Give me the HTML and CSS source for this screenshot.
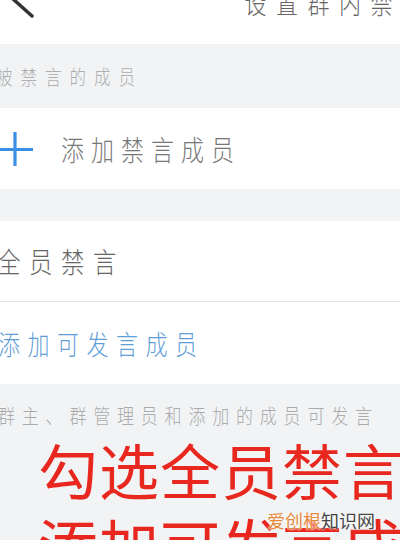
FILE: index.html
```html
<!DOCTYPE html>
<html lang="zh-CN">
<head>
    <meta charset="UTF-8">
    <meta name="viewport" content="width=device-width, initial-scale=1.0">
    <title>设置群内禁言</title>
    <link rel="stylesheet" href="styles.css">
</head>
<body>
    <div class="screen">
        <header class="navbar">
            <a class="nav-back" href="#">
                <svg width="40" height="24" viewBox="0 0 40 24">
                    <path d="M31 -18 L13 -1 L32 16" fill="none" stroke="#333" stroke-width="3.5" stroke-linecap="round" stroke-linejoin="round"/>
                </svg>
            </a>
            <div class="nav-title"><span class="tall">设置群内禁</span></div>
        </header>

        <div class="section-label"><span class="tall">被禁言的成员</span></div>

        <div class="row row-add">
            <svg class="icon-plus" width="36" height="34" viewBox="0 0 36 34">
                <path d="M0 17.5 H36 M18 0 V34" stroke="#3a8ee6" stroke-width="3.2" fill="none"/>
            </svg>
            <span class="tall add-text">添加禁言成员</span>
        </div>

        <div class="gap"></div>

        <div class="group">
            <div class="row row-all"><span class="tall">全员禁言</span></div>
            <div class="row row-speak"><span class="tall">添加可发言成员</span></div>
        </div>

        <div class="footer-note">
            <p class="note"><span class="tall">群主、群管理员和添加的成员可发言</span></p>
            <p class="red-tip">勾选全员禁言<br>添加可发言成员</p>
        </div>

        <div class="watermark"><span class="wm-orange">爱创根</span>知识网</div>
    </div>
</body>
</html>
```

FILE: styles.css
```css
* {
    margin: 0;
    padding: 0;
    box-sizing: border-box;
}

body {
    font-family: "Noto Sans CJK SC", "Noto Sans", sans-serif;
    font-weight: 300;
    background-color: #f2f3f5;
    color: #666;
}

.screen {
    position: relative;
    width: 400px;
    height: 540px;
    overflow: hidden;
    background-color: #f2f3f5;
}

.tall {
    display: inline-block;
    transform: scaleY(1.22);
    white-space: nowrap;
}

/* top bar, cut off at the top edge */
.navbar {
    height: 44px;
    background-color: #fff;
    display: flex;
    justify-content: space-between;
    align-items: flex-start;
}

.nav-back svg {
    display: block;
}

.nav-title {
    margin-top: -9px;
    margin-right: -2px;
    font-size: 22px;
    line-height: 22px;
    letter-spacing: 9.5px;
    color: #666;
}

.section-label {
    height: 64px;
    display: flex;
    align-items: center;
    margin-left: -4px;
    font-size: 16.5px;
    letter-spacing: 8px;
    color: #aeaeae;
}

.row {
    display: flex;
    align-items: center;
    background-color: #fff;
}

.row-add {
    height: 81px;
}

.icon-plus {
    margin-left: -3px;
    flex-shrink: 0;
}

.add-text {
    margin-left: 28px;
    font-size: 23px;
    letter-spacing: 7px;
    color: #777;
}

.gap {
    height: 32px;
}

.row-all {
    height: 81px;
    border-bottom: 1px solid #e4e4e6;
    margin-left: -3px;
    padding-left: 0;
    font-size: 23.5px;
    letter-spacing: 8.5px;
    color: #666;
}

.row-speak {
    height: 82px;
    margin-left: -2px;
    font-size: 22px;
    letter-spacing: 7.5px;
    color: #5f9ed8;
}

.footer-note {
    padding-top: 21px;
}

.note {
    margin-left: -2px;
    font-size: 17px;
    line-height: 20px;
    letter-spacing: 6.8px;
    color: #ababab;
}

.red-tip {
    margin-top: 6px;
    padding-left: 38px;
    font-size: 60px;
    line-height: 75px;
    font-weight: 400;
    letter-spacing: 1px;
    color: #e8281f;
    white-space: nowrap;
}

.watermark {
    position: absolute;
    left: 267px;
    top: 509px;
    font-size: 18px;
    line-height: 22px;
    font-weight: 400;
    color: #444;
    text-shadow: 0 0 2px #fff, 0 0 2px #fff;
}

.wm-orange {
    color: #e5893a;
}
```
